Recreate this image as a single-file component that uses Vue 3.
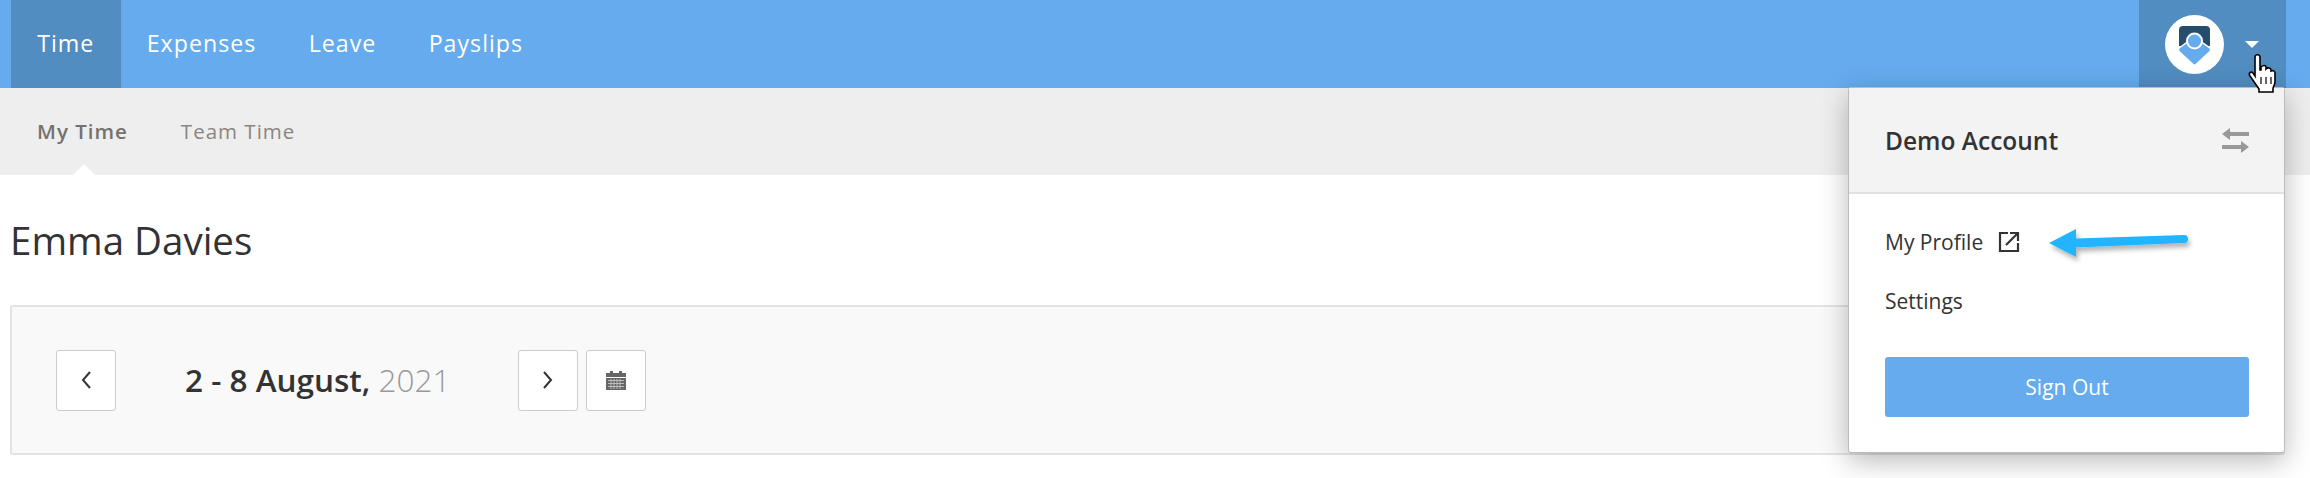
<template>
  <div class="page">
    <!-- top nav -->
    <header class="topbar">
      <nav class="main-nav">
        <a v-for="item in navItems" :key="item" class="nav-link" :class="{ active: item === 'Time' }">{{ item }}</a>
      </nav>
      <div class="user-menu">
        <div class="avatar">
          <svg width="59" height="59" viewBox="0 0 59 59">
            <circle cx="29.500" cy="29.500" r="29.500" fill="#fff" />
            <path d="M14 15a4 4 0 0 1 4-4h23a4 4 0 0 1 4 4v16H14z" fill="#264d6b" />
            <path d="M13.500 33.500l9-6.500h14l9 6.500v2.500L31 49.500a2 2 0 0 1-3 0L13.500 36z" fill="#65abed" stroke="#fff" stroke-width="1.500" />
            <circle cx="29.500" cy="26" r="7.500" fill="#65abed" stroke="#fff" stroke-width="2" />
          </svg>
        </div>
        <span class="caret"></span>
      </div>
    </header>

    <div class="subnav">
      <a class="sub-link current">My Time</a>
      <a class="sub-link">Team Time</a>
    </div>

    <main class="content">
      <h1 class="person">Emma Davies</h1>
      <section class="week-panel">
        <button class="icon-btn">
          <svg width="12" height="20" viewBox="0 0 12 20"><path d="M10 2L3 10l7 8" fill="none" stroke="#333" stroke-width="2" /></svg>
        </button>
        <div class="week-label"><strong>2 - 8 August,</strong> <span>2021</span></div>
        <button class="icon-btn">
          <svg width="12" height="20" viewBox="0 0 12 20"><path d="M2 2l7 8-7 8" fill="none" stroke="#333" stroke-width="2" /></svg>
        </button>
        <button class="icon-btn">
          <svg width="20" height="20" viewBox="0 0 20 20">
            <path d="M0 3h4V1h3v2h6V1h3v2h4v4H0z" fill="#666" />
            <path d="M0 8h20v12H0z" fill="#666" />
            <path d="M2 10.500h16M2 13.500h16M2 16.500h16M5 9v10M8 9v10M11 9v10M14 9v10" stroke="#bbb" stroke-width="1" />
          </svg>
        </button>
      </section>
    </main>

    <!-- dropdown over the page -->
    <div class="dropdown">
      <div class="drop-head">
        <span class="account">Demo Account</span>
        <svg width="27" height="25" viewBox="0 0 27 25">
          <path d="M8 0v4h19v4H8v4L0 6z" fill="#999" />
          <path d="M19 13v4H0v4h19v4l8-6z" fill="#999" />
        </svg>
      </div>
      <div class="drop-body">
        <a class="drop-link">
          My Profile
          <svg class="ext" width="22" height="22" viewBox="0 0 22 22">
            <path d="M10 2H2v18h18v-8" fill="none" stroke="#333" stroke-width="2.200" />
            <path d="M8 14L19 3M12 2h8v8" fill="none" stroke="#333" stroke-width="2.200" />
          </svg>
        </a>
        <a class="drop-link">Settings</a>
        <button class="sign-out">Sign Out</button>
      </div>
    </div>

    <svg class="callout" width="150" height="40" viewBox="0 0 150 40">
      <defs>
        <filter id="arrow-shadow" x="-10%" y="-30%" width="120%" height="180%">
          <feDropShadow dx="2" dy="4" stdDeviation="2.500" flood-color="#000" flood-opacity="0.3" />
        </filter>
      </defs>
      <path d="M2 19L29 5v9.500L137 11a3.500 3.500 0 0 1 0 8L29 23.500V33z" fill="#22b4ff" filter="url(#arrow-shadow)" />
    </svg>

    <svg class="pointer" width="32" height="42" viewBox="0 0 32 42">
      <path d="M8 3c0-3 5-3 5 0v13h1v-3c2-2 5-2 5 0v2c2-2 5-1 5 1v1c2-1 4 0 4 2v9c0 2-1 4-2 6v4H12v-3L3 22c-2-3 1-5 3-3l2 3z" fill="#fff" stroke="#000" stroke-width="1.600" />
      <path d="M14 23v7M19 23v7M24 23v7" stroke="#000" stroke-width="1.200" />
    </svg>
  </div>
</template>

<script setup>
const navItems = ['Time', 'Expenses', 'Leave', 'Payslips']
</script>

<style>
html, body { margin: 0; background: #fff; overflow: hidden; }
</style>

<style scoped>
.page { position: relative; width: 2310px; height: 478px; overflow: hidden; font-family: "Open Sans", sans-serif; color: #333; }
.topbar { height: 88px; background: #65abed; display: flex; justify-content: space-between; padding: 0 24px 0 11px; }
.main-nav { display: flex; }
.nav-link { padding: 0 26.200px; line-height: 87px; font-size: 23.200px; letter-spacing: 1px; color: #fff; }
.nav-link.active { background: #518dc1; }
.user-menu { width: 147px; background: #518dc1; display: flex; align-items: center; padding-left: 26px; box-sizing: border-box; }
.avatar { height: 59px; margin-right: 21px; }
.caret { width: 0; height: 0; border-left: 7px solid transparent; border-right: 7px solid transparent; border-top: 7px solid #fff; }

.subnav { height: 87px; background: #eee; display: flex; padding-left: 37px; gap: 53px; align-items: center; padding-bottom: 2px; box-sizing: border-box; }
.sub-link { position: relative; font-size: 20.500px; letter-spacing: 1px; color: #8a8681; }
.sub-link.current { font-weight: 600; color: #75716d; }
.sub-link.current::after { content: ""; position: absolute; left: 30px; bottom: -36px; border-left: 17px solid transparent; border-right: 17px solid transparent; border-bottom: 17px solid #fff; }

.content { padding: 0 25px 0 10px; }
.person { margin: 0; padding-top: 40px; font-size: 38.500px; font-weight: 400; line-height: 50px; color: #333; height: 130px; box-sizing: border-box; }
.week-panel { height: 150px; box-sizing: border-box; background: #f9f9f9; border: 2px solid #e3e3e3; border-radius: 3px; display: flex; align-items: center; padding-left: 44px; gap: 8px; }
.icon-btn { width: 60px; height: 61px; padding: 0; background: #fff; border: 1px solid #ccc; border-radius: 3px; display: flex; align-items: center; justify-content: center; }
.week-label { width: 386px; padding-left: 61px; padding-bottom: 2px; box-sizing: border-box; font-size: 31.500px; }
.week-label strong { font-weight: 600; }
.week-label span { font-weight: 300; color: #999; }

.dropdown { position: absolute; left: 1848px; top: 87px; width: 437px; height: 366px; box-sizing: border-box; background: #fff; border: 1px solid #bbb; border-radius: 3px; box-shadow: 0 8px 28px rgba(0, 0, 0, 0.28); }
.drop-head { height: 106px; box-sizing: border-box; background: #f3f3f3; border-bottom: 2px solid #e1e1e1; display: flex; align-items: center; justify-content: space-between; padding: 0 35px 0 36px; }
.account { font-size: 24.500px; font-weight: 600; color: #333; }
.drop-body { padding: 33px 35px 0 36px; display: flex; flex-direction: column; }
.drop-link { font-size: 21px; line-height: 30px; color: #333; display: flex; align-items: center; height: 30px; margin-bottom: 29px; }
.ext { margin-left: 15px; }
.sign-out { margin-top: 12px; height: 60px; background: #65abed; border: 0; border-radius: 3px; color: #fff; font-family: inherit; font-size: 21px; }

.callout { position: absolute; left: 2047px; top: 224px; }
.pointer { position: absolute; left: 2247px; top: 54px; }
</style>
